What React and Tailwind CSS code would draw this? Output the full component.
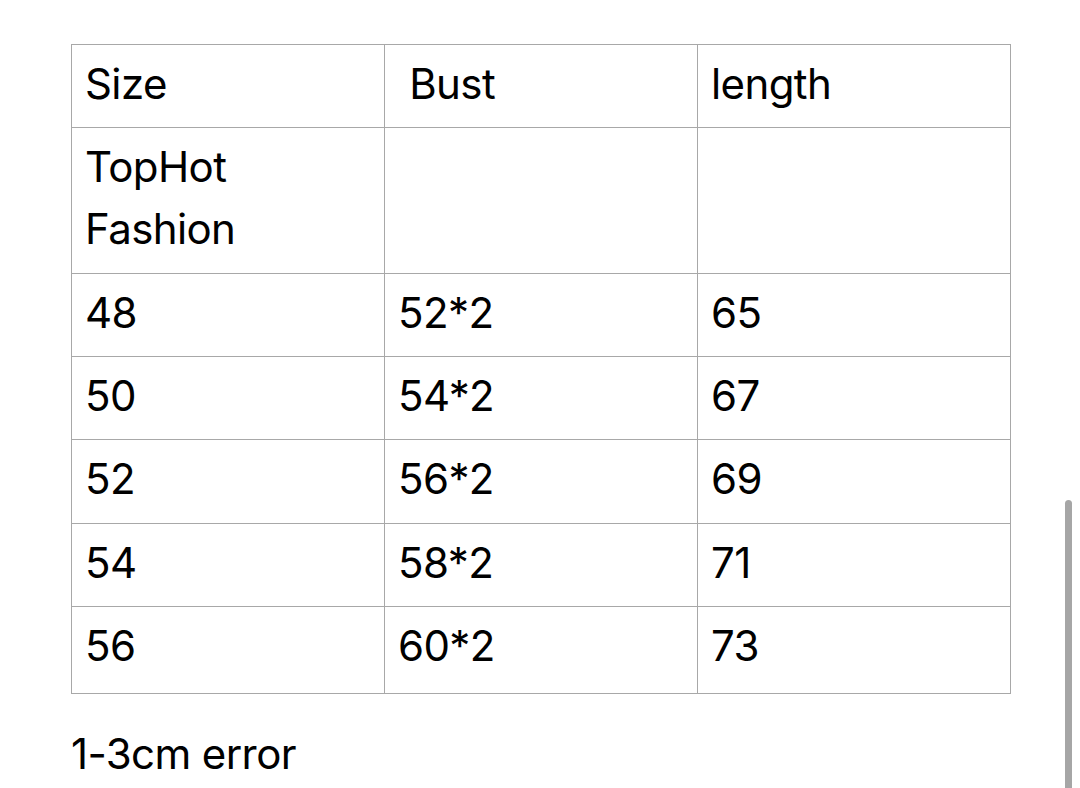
import React from 'react';

const rows = [
  ['48', '52*2', '65'],
  ['50', '54*2', '67'],
  ['52', '56*2', '69'],
  ['54', '58*2', '71'],
  ['56', '60*2', '73'],
];

const cell = 'border border-[#a8a8a8] px-[13px] pt-[8px] pb-[12.35px] align-top';
const lastCell = 'border border-[#a8a8a8] px-[13px] pt-[8px] pb-[16px] align-top';

const App = () => {
  return (
    <div
      className="relative min-h-screen overflow-hidden bg-white text-black"
      style={{ fontFamily: 'Inter, "Noto Sans", sans-serif' }}
    >
      <div className="pl-[71px] pt-[44px] text-[42px] leading-[62px] tracking-[-0.6px]">
        <table className="w-[939px] border-collapse table-fixed">
          <colgroup>
            <col className="w-[313px]" />
            <col className="w-[313px]" />
            <col className="w-[313px]" />
          </colgroup>
          <tbody>
            <tr>
              <td className={cell}>Size</td>
              <td className={cell}>{'\u00a0Bust'}</td>
              <td className={cell}>length</td>
            </tr>
            <tr>
              <td className={cell}>
                TopHot
                <br />
                Fashion
              </td>
              <td className={cell}></td>
              <td className={cell}></td>
            </tr>
            {rows.map((r, ri) => (
              <tr key={r[0]}>
                {r.map((v, i) => (
                  <td key={i} className={ri === rows.length - 1 ? lastCell : cell}>
                    {v}
                  </td>
                ))}
              </tr>
            ))}
          </tbody>
        </table>
        <p className="mt-[29px]">1-3cm error</p>
      </div>
      {/* scroll indicator */}
      <div className="absolute left-[1065px] top-[500px] h-[320px] w-[7px] rounded-full bg-[#a6a6a6]" />
    </div>
  );
};

export default App;
